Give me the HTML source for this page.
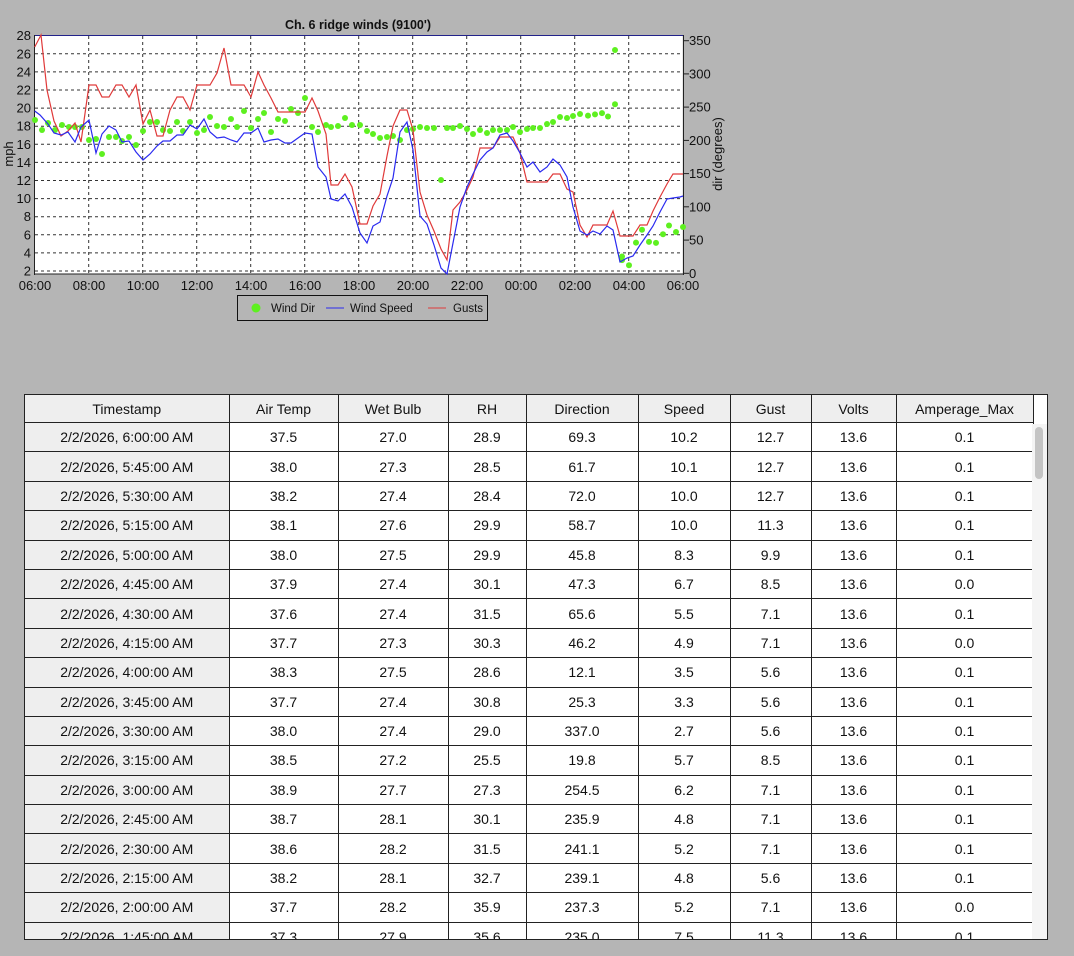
<!DOCTYPE html>
<html><head><meta charset="utf-8">
<style>
body{margin:0;background:#b5b5b5;width:1074px;height:956px;overflow:hidden;font-family:"Liberation Sans",Arial,sans-serif;}
svg{position:absolute;left:0;top:0}
#tw{position:absolute;left:24px;top:394px;width:1024px;height:546px;overflow:hidden;background:#fff;border:1px solid #222;box-sizing:border-box}
table{border-collapse:collapse;table-layout:fixed;width:1008px;font-size:14px;color:#111}
td,th{border:1px solid #222;text-align:center;padding:0;font-weight:normal}
th{background:#eee;height:27px;border-top:none}
td{height:28.4px}
td:first-child{background:#eee}
tr td:first-child,tr th:first-child{border-left:none}
#sb{position:absolute;right:0;top:29px;width:15px;bottom:0;background:#f4f4f4}
#sb div{position:absolute;left:3px;top:3px;width:8px;height:52px;background:#c4c4c4;border-radius:4px}
</style></head><body>
<svg width="1074" height="340" font-family="Liberation Sans, Arial, sans-serif">
<rect x="34.7" y="35.7" width="648" height="238" fill="#fff"/>
<g stroke="#333" stroke-dasharray="3,3" stroke-width="1">
<line x1="35" x2="683" y1="252.9" y2="252.9"/><line x1="35" x2="683" y1="234.8" y2="234.8"/><line x1="35" x2="683" y1="216.7" y2="216.7"/><line x1="35" x2="683" y1="198.6" y2="198.6"/><line x1="35" x2="683" y1="180.5" y2="180.5"/><line x1="35" x2="683" y1="162.4" y2="162.4"/><line x1="35" x2="683" y1="144.3" y2="144.3"/><line x1="35" x2="683" y1="126.2" y2="126.2"/><line x1="35" x2="683" y1="108.1" y2="108.1"/><line x1="35" x2="683" y1="90" y2="90"/><line x1="35" x2="683" y1="71.9" y2="71.9"/><line x1="35" x2="683" y1="53.8" y2="53.8"/><line x1="35" x2="683" y1="271" y2="271"/>
<line y1="36" y2="274" x1="88.7" x2="88.7"/><line y1="36" y2="274" x1="142.7" x2="142.7"/><line y1="36" y2="274" x1="196.7" x2="196.7"/><line y1="36" y2="274" x1="250.7" x2="250.7"/><line y1="36" y2="274" x1="304.7" x2="304.7"/><line y1="36" y2="274" x1="358.7" x2="358.7"/><line y1="36" y2="274" x1="412.7" x2="412.7"/><line y1="36" y2="274" x1="466.7" x2="466.7"/><line y1="36" y2="274" x1="520.7" x2="520.7"/><line y1="36" y2="274" x1="574.7" x2="574.7"/><line y1="36" y2="274" x1="628.7" x2="628.7"/>
</g>
<line x1="34" x2="684" y1="35.5" y2="35.5" stroke="#22228a"/>
<line x1="34" x2="684" y1="274" y2="274" stroke="#222"/>
<line x1="34.5" x2="34.5" y1="35" y2="275" stroke="#222"/>
<line x1="683.5" x2="683.5" y1="35" y2="275" stroke="#222"/>
<g fill="#5ef020">
<circle cx="35" cy="120" r="3"/><circle cx="42" cy="130" r="3"/><circle cx="48" cy="123" r="3"/><circle cx="55" cy="130" r="3"/><circle cx="62" cy="125" r="3"/><circle cx="69" cy="127" r="3"/><circle cx="75" cy="127" r="3"/><circle cx="82" cy="127" r="3"/><circle cx="89" cy="140" r="3"/><circle cx="96" cy="139" r="3"/><circle cx="102" cy="154" r="3"/><circle cx="109" cy="137" r="3"/><circle cx="116" cy="137" r="3"/><circle cx="122" cy="141" r="3"/><circle cx="129" cy="137" r="3"/><circle cx="136" cy="145" r="3"/><circle cx="143" cy="131" r="3"/><circle cx="150" cy="122" r="3"/><circle cx="157" cy="122" r="3"/><circle cx="163" cy="130" r="3"/><circle cx="170" cy="131" r="3"/><circle cx="177" cy="122" r="3"/><circle cx="183" cy="131" r="3"/><circle cx="190" cy="122" r="3"/><circle cx="197" cy="133" r="3"/><circle cx="204" cy="130" r="3"/><circle cx="210" cy="117" r="3"/><circle cx="217" cy="126" r="3"/><circle cx="224" cy="127" r="3"/><circle cx="231" cy="119" r="3"/><circle cx="237" cy="127" r="3"/><circle cx="244" cy="111" r="3"/><circle cx="251" cy="128" r="3"/><circle cx="258" cy="119" r="3"/><circle cx="264" cy="113" r="3"/><circle cx="271" cy="132" r="3"/><circle cx="278" cy="119" r="3"/><circle cx="285" cy="121" r="3"/><circle cx="291" cy="109" r="3"/><circle cx="298" cy="113" r="3"/><circle cx="305" cy="98" r="3"/><circle cx="312" cy="127" r="3"/><circle cx="318" cy="132" r="3"/><circle cx="326" cy="125" r="3"/><circle cx="331" cy="127" r="3"/><circle cx="338" cy="126" r="3"/><circle cx="345" cy="118" r="3"/><circle cx="352" cy="125" r="3"/><circle cx="360" cy="125" r="3"/><circle cx="367" cy="131" r="3"/><circle cx="373" cy="134" r="3"/><circle cx="380" cy="138" r="3"/><circle cx="387" cy="137" r="3"/><circle cx="393" cy="136" r="3"/><circle cx="400" cy="140" r="3"/><circle cx="407" cy="130" r="3"/><circle cx="413" cy="129" r="3"/><circle cx="420" cy="127" r="3"/><circle cx="427" cy="128" r="3"/><circle cx="434" cy="128" r="3"/><circle cx="441" cy="180" r="3"/><circle cx="447" cy="128" r="3"/><circle cx="453" cy="128" r="3"/><circle cx="460" cy="126" r="3"/><circle cx="467" cy="129" r="3"/><circle cx="473" cy="134" r="3"/><circle cx="480" cy="130" r="3"/><circle cx="487" cy="133" r="3"/><circle cx="493" cy="130" r="3"/><circle cx="500" cy="130" r="3"/><circle cx="507" cy="130" r="3"/><circle cx="513" cy="127" r="3"/><circle cx="520" cy="132" r="3"/><circle cx="527" cy="129" r="3"/><circle cx="533" cy="128" r="3"/><circle cx="540" cy="128" r="3"/><circle cx="547" cy="124" r="3"/><circle cx="553" cy="122" r="3"/><circle cx="560" cy="117" r="3"/><circle cx="567" cy="118" r="3"/><circle cx="573" cy="116" r="3"/><circle cx="580" cy="114" r="3"/><circle cx="588" cy="115.6" r="3"/><circle cx="595" cy="114.4" r="3"/><circle cx="602" cy="113.1" r="3"/><circle cx="608" cy="116.5" r="3"/><circle cx="615" cy="104.2" r="3"/><circle cx="622" cy="260.1" r="3"/><circle cx="615" cy="50" r="3"/><circle cx="622" cy="256.5" r="3"/><circle cx="629" cy="265.3" r="3"/><circle cx="636" cy="242.6" r="3"/><circle cx="642" cy="229.7" r="3"/><circle cx="649" cy="241.9" r="3"/><circle cx="656" cy="242.9" r="3"/><circle cx="663" cy="234.3" r="3"/><circle cx="669" cy="225.5" r="3"/><circle cx="676" cy="232" r="3"/><circle cx="683" cy="227" r="3"/>
</g>
<polyline fill="none" stroke="#e03a3a" stroke-width="1.2" points="34.7,47 41,35 47,90 54,121 61,136 68,131 75,123 81,142 89,85 96,85 102,97 109,97 116,85 122,85 129,97 136,85 143,124 150,110 157,136 163,136 170,110 177,97 183,97 190,110 197,85 204,85 210,85 217,73 224,48 231,85 237,85 244,85 251,97 258,72 264,85 271,98 278,112 285,112 291,112 298,112 305,112 312,98 318,111 326,134 331,185 338,185 345,174 352,187 360,224 367,224 373,206 380,194 387,156 393,126 400,110 407,110 413,130 420,192 427,215 434,231 441,249 447,260 453,210 460,202 467,190 473,177 480,148 487,148 493,148 500,137 507,137 513,137 520,153 527,182 533,182 540,182 547,182 553,174 560,174 567,189 573,192 580,225 587,237 593,225 600,225 607,225 613,211 620,236 627,236 633,236 640,225 647,225 653,211 660,197 667,184 673,174 680,174 683,174"/>
<polyline fill="none" stroke="#2a2af0" stroke-width="1.2" points="34.7,111 40,115 48,124 54,133 61,135 68,132 75,142 81,127 89,120 96,153 102,134 109,126 116,130 122,142 129,141 136,152 143,160 150,154 157,146 163,141 170,141 177,135 183,135 190,125 197,129 204,119 210,132 217,138 224,137 231,140 237,142 244,133 251,133 258,128 264,142 271,140 278,139 285,143 291,143 298,138 305,133 312,134 318,167 326,177 331,199 338,201 345,194 352,207 360,233 367,243 373,226 380,222 387,196 393,178 400,132 407,122 413,150 420,216 427,224 434,245 441,268 447,274 453,243 460,207 467,187 473,174 480,160 487,152 493,148 500,135 507,133 513,141 520,153 527,167 533,162 540,172 547,167 553,159 560,165 567,177 573,207 580,231 587,235 593,231 600,234 607,226 613,230 620,262 627,258 633,256 640,245 647,235 653,226 660,212 667,199 673,198 680,197 683,196"/>
<text x="358" y="29" font-size="12.5" font-weight="bold" text-anchor="middle" fill="#111">Ch. 6 ridge winds (9100')</text>
<g font-size="13" fill="#111" text-anchor="end">
<text x="31" y="275.5">2</text><text x="31" y="257.4">4</text><text x="31" y="239.3">6</text><text x="31" y="221.2">8</text><text x="31" y="203.1">10</text><text x="31" y="185">12</text><text x="31" y="166.9">14</text><text x="31" y="148.8">16</text><text x="31" y="130.7">18</text><text x="31" y="112.6">20</text><text x="31" y="94.5">22</text><text x="31" y="76.4">24</text><text x="31" y="58.3">26</text><text x="31" y="40.2">28</text>
</g>
<g stroke="#222"><line x1="683" x2="689" y1="273.3" y2="273.3"/><line x1="683" x2="689" y1="240.1" y2="240.1"/><line x1="683" x2="689" y1="206.8" y2="206.8"/><line x1="683" x2="689" y1="173.6" y2="173.6"/><line x1="683" x2="689" y1="140.4" y2="140.4"/><line x1="683" x2="689" y1="107.1" y2="107.1"/><line x1="683" x2="689" y1="73.9" y2="73.9"/><line x1="683" x2="689" y1="40.7" y2="40.7"/></g>
<g font-size="13" fill="#111">
<text x="689" y="278">0</text><text x="689" y="244.6">50</text><text x="689" y="211.3">100</text><text x="689" y="178.1">150</text><text x="689" y="144.9">200</text><text x="689" y="111.6">250</text><text x="689" y="78.4">300</text><text x="689" y="45.2">350</text>
</g>
<text transform="translate(13,154) rotate(-90)" font-size="13" fill="#111" text-anchor="middle">mph</text>
<text transform="translate(722,154) rotate(-90)" font-size="13" fill="#111" text-anchor="middle">dir (degrees)</text>
<g font-size="13" fill="#111" text-anchor="middle">
<text x="35" y="290">06:00</text><text x="89" y="290">08:00</text><text x="143" y="290">10:00</text><text x="197" y="290">12:00</text><text x="251" y="290">14:00</text><text x="305" y="290">16:00</text><text x="359" y="290">18:00</text><text x="413" y="290">20:00</text><text x="467" y="290">22:00</text><text x="521" y="290">00:00</text><text x="575" y="290">02:00</text><text x="629" y="290">04:00</text><text x="683" y="290">06:00</text>
</g>
<rect x="237.5" y="295.5" width="250" height="25" fill="none" stroke="#111"/>
<circle cx="256" cy="308" r="4.5" fill="#5ef020"/>
<text x="271" y="312" font-size="11.5" fill="#111">Wind Dir</text>
<line x1="326" x2="344" y1="308" y2="308" stroke="#2a2af0"/>
<text x="350" y="312" font-size="11.5" fill="#111">Wind Speed</text>
<line x1="428" x2="446" y1="308" y2="308" stroke="#e03a3a"/>
<text x="453" y="312" font-size="11.5" fill="#111">Gusts</text>
</svg>
<div id="tw">
<table>
<colgroup><col style="width:204px"><col style="width:109px"><col style="width:110px"><col style="width:78px"><col style="width:112px"><col style="width:92px"><col style="width:81px"><col style="width:85px"><col style="width:137px"></colgroup>
<tr><th>Timestamp</th><th>Air Temp</th><th>Wet Bulb</th><th>RH</th><th>Direction</th><th>Speed</th><th>Gust</th><th>Volts</th><th>Amperage_Max</th></tr>
<tr><td>2/2/2026, 6:00:00 AM</td><td>37.5</td><td>27.0</td><td>28.9</td><td>69.3</td><td>10.2</td><td>12.7</td><td>13.6</td><td>0.1</td></tr>
<tr><td>2/2/2026, 5:45:00 AM</td><td>38.0</td><td>27.3</td><td>28.5</td><td>61.7</td><td>10.1</td><td>12.7</td><td>13.6</td><td>0.1</td></tr>
<tr><td>2/2/2026, 5:30:00 AM</td><td>38.2</td><td>27.4</td><td>28.4</td><td>72.0</td><td>10.0</td><td>12.7</td><td>13.6</td><td>0.1</td></tr>
<tr><td>2/2/2026, 5:15:00 AM</td><td>38.1</td><td>27.6</td><td>29.9</td><td>58.7</td><td>10.0</td><td>11.3</td><td>13.6</td><td>0.1</td></tr>
<tr><td>2/2/2026, 5:00:00 AM</td><td>38.0</td><td>27.5</td><td>29.9</td><td>45.8</td><td>8.3</td><td>9.9</td><td>13.6</td><td>0.1</td></tr>
<tr><td>2/2/2026, 4:45:00 AM</td><td>37.9</td><td>27.4</td><td>30.1</td><td>47.3</td><td>6.7</td><td>8.5</td><td>13.6</td><td>0.0</td></tr>
<tr><td>2/2/2026, 4:30:00 AM</td><td>37.6</td><td>27.4</td><td>31.5</td><td>65.6</td><td>5.5</td><td>7.1</td><td>13.6</td><td>0.1</td></tr>
<tr><td>2/2/2026, 4:15:00 AM</td><td>37.7</td><td>27.3</td><td>30.3</td><td>46.2</td><td>4.9</td><td>7.1</td><td>13.6</td><td>0.0</td></tr>
<tr><td>2/2/2026, 4:00:00 AM</td><td>38.3</td><td>27.5</td><td>28.6</td><td>12.1</td><td>3.5</td><td>5.6</td><td>13.6</td><td>0.1</td></tr>
<tr><td>2/2/2026, 3:45:00 AM</td><td>37.7</td><td>27.4</td><td>30.8</td><td>25.3</td><td>3.3</td><td>5.6</td><td>13.6</td><td>0.1</td></tr>
<tr><td>2/2/2026, 3:30:00 AM</td><td>38.0</td><td>27.4</td><td>29.0</td><td>337.0</td><td>2.7</td><td>5.6</td><td>13.6</td><td>0.1</td></tr>
<tr><td>2/2/2026, 3:15:00 AM</td><td>38.5</td><td>27.2</td><td>25.5</td><td>19.8</td><td>5.7</td><td>8.5</td><td>13.6</td><td>0.1</td></tr>
<tr><td>2/2/2026, 3:00:00 AM</td><td>38.9</td><td>27.7</td><td>27.3</td><td>254.5</td><td>6.2</td><td>7.1</td><td>13.6</td><td>0.1</td></tr>
<tr><td>2/2/2026, 2:45:00 AM</td><td>38.7</td><td>28.1</td><td>30.1</td><td>235.9</td><td>4.8</td><td>7.1</td><td>13.6</td><td>0.1</td></tr>
<tr><td>2/2/2026, 2:30:00 AM</td><td>38.6</td><td>28.2</td><td>31.5</td><td>241.1</td><td>5.2</td><td>7.1</td><td>13.6</td><td>0.1</td></tr>
<tr><td>2/2/2026, 2:15:00 AM</td><td>38.2</td><td>28.1</td><td>32.7</td><td>239.1</td><td>4.8</td><td>5.6</td><td>13.6</td><td>0.1</td></tr>
<tr><td>2/2/2026, 2:00:00 AM</td><td>37.7</td><td>28.2</td><td>35.9</td><td>237.3</td><td>5.2</td><td>7.1</td><td>13.6</td><td>0.0</td></tr>
<tr><td>2/2/2026, 1:45:00 AM</td><td>37.3</td><td>27.9</td><td>35.6</td><td>235.0</td><td>7.5</td><td>11.3</td><td>13.6</td><td>0.1</td></tr>
</table>
<div id="sb"><div></div></div>
</div>
</body></html>
